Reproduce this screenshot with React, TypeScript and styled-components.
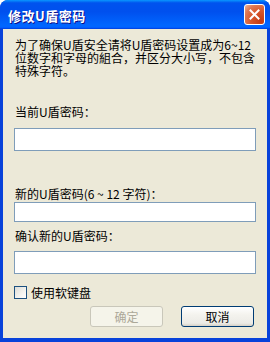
import styled, { createGlobalStyle } from 'styled-components';

const GlobalStyle = createGlobalStyle`
  html, body {
    margin: 0;
    padding: 0;
    background: #fff;
  }
  body {
    font-family: "Noto Sans CJK SC", "Liberation Sans", sans-serif;
  }
`;

// 窗口外框
const Window = styled.div`
  width: 270px;
  height: 342px;
  box-sizing: border-box;
  display: flex;
  flex-direction: column;
  border-radius: 8px 8px 0 0;
  overflow: hidden;
  background: #0842da;
`;

const TitleBar = styled.div`
  height: 29px;
  flex: none;
  display: flex;
  align-items: center;
  justify-content: space-between;
  padding: 0 5px 0 8px;
  background: linear-gradient(
    180deg,
    #0997ff 0%,
    #0053ee 10%,
    #0050ee 40%,
    #0066ff 86%,
    #0066ff 92%,
    #005bff 95%,
    #003dd7 100%
  );
`;

const Title = styled.span`
  color: #fff;
  font-size: 13px;
  font-weight: bold;
  line-height: 13px;
  letter-spacing: 0.5px;
  text-shadow: 1px 1px #0f1089;
  padding-top: 1px;
`;

const CloseButton = styled.div`
  width: 21px;
  height: 21px;
  box-sizing: border-box;
  border: 1px solid #fff;
  border-radius: 3px;
  display: flex;
  align-items: center;
  justify-content: center;
  background: radial-gradient(
    circle at 85% 85%,
    #c43a12 0%,
    #d8572b 45%,
    #e07a55 75%,
    #f0b49c 100%
  );
`;

const Body = styled.div`
  flex: 1;
  margin: 0 3px 4px;
  background: #ece9d8;
  padding: 9px 11px 0;
  display: flex;
  flex-direction: column;
  font-size: 12px;
  line-height: 13px;
  color: #000;
`;

const Intro = styled.p`
  margin: 0 0 0 1px;
  line-height: 13px;
`;

const Label = styled.div<{ $gap: number }>`
  margin-top: ${(p) => p.$gap}px;
  margin-left: 1px;
  line-height: 13px;
`;

const Field = styled.input<{ $h: number; $gap: number }>`
  display: block;
  width: 100%;
  height: ${(p) => p.$h}px;
  margin: ${(p) => p.$gap}px 0 0;
  box-sizing: border-box;
  border: 1px solid #7f9db9;
  background: #fff;
  outline: none;
  padding: 0 3px;
`;

const CheckRow = styled.label`
  display: flex;
  align-items: center;
  gap: 4px;
  margin-top: 12px;
`;

const CheckBox = styled.span`
  width: 13px;
  height: 13px;
  box-sizing: border-box;
  border: 1px solid #1c5180;
  background: linear-gradient(135deg, #dcdcd7 0%, #f4f4f0 60%, #ffffff 100%);
`;

const Buttons = styled.div`
  display: flex;
  justify-content: flex-end;
  gap: 18px;
  margin-top: 7px;
  padding-right: 2px;
`;

const Button = styled.button<{ $off?: boolean }>`
  width: 73px;
  height: 21px;
  box-sizing: border-box;
  padding: 0;
  border-radius: 3px;
  font-family: "Noto Sans CJK SC", sans-serif;
  font-size: 12px;
  line-height: 12px;
  border: 1px solid ${(p) => (p.$off ? '#c9c7ba' : '#003c74')};
  color: ${(p) => (p.$off ? '#aca899' : '#000')};
  background: ${(p) =>
    p.$off
      ? '#f5f4ea'
      : 'linear-gradient(180deg, #ffffff 0%, #f4f3ee 40%, #ecebe6 85%, #d6d0c5 100%)'};
`;

export default function App() {
  return (
    <>
      <GlobalStyle />
      <Window>
        <TitleBar>
          <Title>修改U盾密码</Title>
          <CloseButton>
            <svg width="11" height="11" viewBox="0 0 11 11">
              <path d="M1.5 1.5 L9.5 9.5 M9.5 1.5 L1.5 9.5" stroke="#fff" strokeWidth="2" strokeLinecap="square" />
            </svg>
          </CloseButton>
        </TitleBar>
        <Body>
          <Intro>
            为了确保U盾安全请将U盾密码设置成为6~12
            <br />
            位数字和字母的組合，并区分大小写，不包含
            <br />
            特殊字符。
          </Intro>
          <Label $gap={28}>当前U盾密码：</Label>
          <Field type="password" $h={23} $gap={10} />
          <Label $gap={36}>新的U盾密码(6 ~ 12 字符)：</Label>
          <Field type="password" $h={20} $gap={2} />
          <Label $gap={7}>确认新的U盾密码：</Label>
          <Field type="password" $h={23} $gap={9} />
          <CheckRow>
            <CheckBox />
            <span>使用软键盘</span>
          </CheckRow>
          <Buttons>
            <Button $off disabled>确定</Button>
            <Button>取消</Button>
          </Buttons>
        </Body>
      </Window>
    </>
  );
}
